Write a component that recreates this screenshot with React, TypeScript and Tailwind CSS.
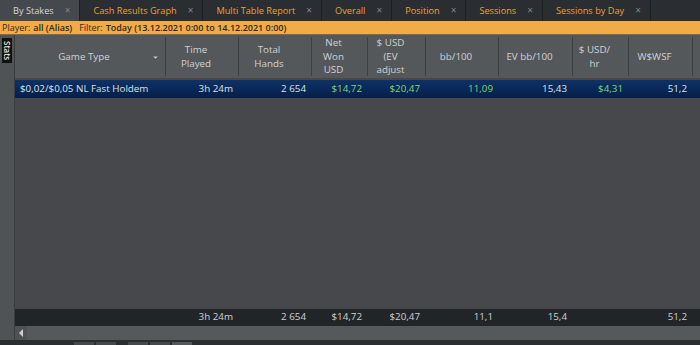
import { ChevronDown } from "lucide-react";

const tabs = [
  "By Stakes",
  "Cash Results Graph",
  "Multi Table Report",
  "Overall",
  "Position",
  "Sessions",
  "Sessions by Day",
];

interface Column {
  lines: string[];
  width: string;
  arrow?: boolean;
}

const columns: Column[] = [
  { lines: ["Game Type"], width: "w-[151px]", arrow: true },
  { lines: ["Time", "Played"], width: "w-[73px]" },
  { lines: ["Total", "Hands"], width: "w-[73px]" },
  { lines: ["Net", "Won", "USD"], width: "w-[56px]" },
  { lines: ["$ USD", "(EV", "adjust"], width: "w-[58px]" },
  { lines: ["bb/100"], width: "w-[73px]" },
  { lines: ["EV bb/100"], width: "w-[74px]" },
  { lines: ["$ USD/", "hr"], width: "w-[56px]" },
  { lines: ["W$WSF"], width: "w-[64px]" },
];

// [text, green?]
const row: [string, boolean][] = [
  ["3h 24m", false],
  ["2 654", false],
  ["$14,72", true],
  ["$20,47", true],
  ["11,09", true],
  ["15,43", false],
  ["$4,31", true],
  ["51,2", false],
];

const totals = ["3h 24m", "2 654", "$14,72", "$20,47", "11,1", "15,4", "", "51,2"];

export default function App() {
  return (
    <div className="w-[700px] h-[345px] overflow-hidden flex flex-col bg-[#46484b] font-['Open_Sans',sans-serif]">
      {/* Tabs */}
      <div className="h-[21px] flex bg-[#2a2d31] shrink-0">
        {tabs.map((t, i) => (
          <div
            key={t}
            className={`flex items-center shrink-0 whitespace-nowrap pl-[13px] pr-[9px] border-r border-[#1d1f22] text-[9.2px] ${
              i === 0 ? "bg-[#45484c] text-[#d4d6d8]" : "text-[#e9a13a]"
            }`}
          >
            <span>{t}</span>
            <span className="ml-[11px] text-[#83868a] text-[10px]">×</span>
          </div>
        ))}
      </div>

      {/* Filter */}
      <div className="h-[14px] bg-[#f2ab47] flex items-center pl-[2px] text-[9px] text-[#2b2a28] whitespace-nowrap shrink-0 border-b border-[#7c6a4a]">
        <span>Player: </span>
        <span className="font-semibold ml-[3px]">all (Alias)</span>
        <span className="ml-[7px]">Filter: </span>
        <span className="font-semibold ml-[3px]">Today (13.12.2021 0:00 to 14.12.2021 0:00)</span>
      </div>

      <div className="flex-1 flex min-h-0">
        {/* Side strip */}
        <div className="w-[15px] bg-[#505356] border-r border-[#3a3c3f] shrink-0 pt-[3px] flex justify-center">
          <div className="h-[25px] w-[10px] bg-[#111] text-[#e5e5e5] text-[8px] font-semibold flex items-center justify-center [writing-mode:vertical-rl]">
            Stats
          </div>
        </div>

        <div className="flex-1 flex flex-col min-w-0">
          {/* Header */}
          <div className="h-[43px] bg-[#55585b] flex shrink-0 text-[#cfd1d3] text-[9.8px] leading-[13.5px]">
            {columns.map((c) => (
              <div
                key={c.lines.join(" ")}
                className={`${c.width} shrink-0 relative flex items-center justify-center pr-[12px] border-r border-[#3d4043] my-[2px]`}
              >
                <div className="text-center">
                  {c.lines.map((l) => (
                    <div key={l}>{l}</div>
                  ))}
                </div>
                {c.arrow && (
                  <ChevronDown
                    size={9}
                    strokeWidth={0}
                    fill="#c9cbcd"
                    className="absolute right-[5px] top-[16px]"
                  />
                )}
              </div>
            ))}
          </div>

          {/* Selected row */}
          <div className="h-[18px] mt-[2px] flex items-center bg-gradient-to-b from-[#0d3266] to-[#061f49] text-[9.8px] text-[#dde2ea] shrink-0 whitespace-nowrap">
            <div className="w-[151px] shrink-0 pl-[5px]">$0,02/$0,05 NL Fast Holdem</div>
            {row.map(([v, g], i) => (
              <div
                key={i}
                className={`${columns[i + 1].width} shrink-0 text-right pr-[6px] ${g ? "text-[#82d47e]" : ""}`}
              >
                {v}
              </div>
            ))}
          </div>

          <div className="flex-1" />

          {/* Totals */}
          <div className="h-[17px] bg-[#222528] flex items-center text-[9.8px] text-[#cfd1d3] shrink-0 whitespace-nowrap">
            <div className="w-[151px] shrink-0" />
            {totals.map((v, i) => (
              <div key={i} className={`${columns[i + 1].width} shrink-0 text-right pr-[6px]`}>
                {v}
              </div>
            ))}
          </div>

          {/* Scrollbar */}
          <div className="h-[14px] bg-[#56595c] flex shrink-0">
            <div className="w-[12px] bg-[#4f5255] flex items-center justify-center">
              <div className="w-0 h-0 border-y-[4px] border-y-transparent border-r-[4px] border-r-[#d0d0d0]" />
            </div>
          </div>
        </div>
      </div>

      {/* Bottom strip */}
      <div className="h-[5px] bg-[#2a2d31] flex items-end gap-[2px] pl-[74px] shrink-0">
        <div className="w-[20px] h-[3px] bg-[#45484c]" />
        <div className="w-[20px] h-[3px] bg-[#45484c]" />
        <div className="w-[20px] h-[3px] bg-[#45484c] ml-[10px]" />
        <div className="w-[20px] h-[3px] bg-[#45484c]" />
        <div className="w-[20px] h-[3px] bg-[#55585b]" />
      </div>
    </div>
  );
}
